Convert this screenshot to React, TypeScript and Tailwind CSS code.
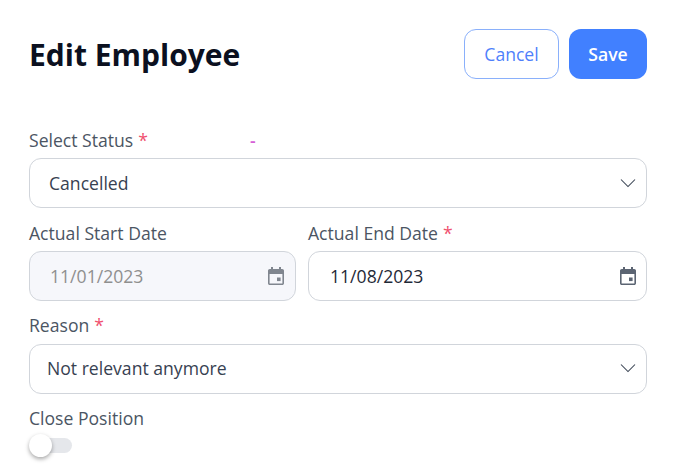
const font = 'font-["Open_Sans",sans-serif]'

function Chevron() {
  return (
    <svg width="16" height="10" viewBox="0 0 16 10" fill="none" stroke="#374151" strokeWidth="1.05">
      <path d="M1 1.5 L8 8.5 L15 1.5" />
    </svg>
  )
}

function CalendarIcon({ color }: { color: string }) {
  return (
    <svg width="16" height="18" viewBox="0 0 16 18" fill={color}>
      <path d="M3 0h2v2h6V0h2v2h1.2C15.2 2 16 2.8 16 3.8v12.4c0 1-.8 1.8-1.8 1.8H1.8C.8 18 0 17.2 0 16.2V3.8C0 2.8.8 2 1.8 2H3V0zM1.6 7v9.4h12.8V7H1.6z" />
      <rect x="9" y="10.5" width="3.6" height="3.6" />
    </svg>
  )
}

function Label({ text, required }: { text: string; required?: boolean }) {
  return (
    <div className="h-[18px] flex items-center text-[17.6px] leading-[18px] text-[#4b5563] whitespace-nowrap">
      {text}
      {required && <span className="ml-[5px] text-[#f0506e]">*</span>}
    </div>
  )
}

function Select({ value, pad }: { value: string; pad: string }) {
  return (
    <div className={`h-[50px] flex items-center justify-between ${pad} pr-[10px] border border-[#d1d5db] rounded-[12px] bg-white text-[17.6px] text-[#374151]`}>
      <span>{value}</span>
      <Chevron />
    </div>
  )
}

export default function App() {
  return (
    <div className={`${font} w-[676px] h-[476px] bg-white pl-[29px] pr-[29px] pt-[29px] overflow-hidden`}>
      <div className="flex items-center justify-between h-[50px]">
        <h1 className="text-[30px] font-bold text-[#0b1020] leading-none pt-[2px]">Edit Employee</h1>
        <div className="flex gap-[10px]">
          <button className="w-[95px] h-[50px] rounded-[12px] border border-[#8ab0fb] bg-white text-[#4f7ffb] text-[17.6px]">Cancel</button>
          <button className="w-[78px] h-[50px] rounded-[12px] bg-[#4180ff] text-white text-[17.6px] font-semibold">Save</button>
        </div>
      </div>

      <div className="mt-[52px] relative">
        <Label text="Select Status" required />
        <span className="absolute left-[221px] top-0 text-[17.6px] leading-[18px] font-semibold text-[#d65fd6]">-</span>
      </div>
      <div className="mt-[9px]">
        <Select value="Cancelled" pad="pl-[19px]" />
      </div>

      <div className="mt-[16px] grid grid-cols-[267px_339px] gap-[12px]">
        <div>
          <Label text="Actual Start Date" />
          <div className="mt-[9px] h-[50px] flex items-center justify-between pl-[20px] pr-[11px] border border-[#d1d5db] rounded-[12px] bg-[#f6f7fb] text-[17.6px] text-[#8f8f8f]">
            <span>11/01/2023</span>
            <CalendarIcon color="#80868f" />
          </div>
        </div>
        <div>
          <Label text="Actual End Date" required />
          <div className="mt-[9px] h-[50px] flex items-center justify-between pl-[21px] pr-[10px] border border-[#d1d5db] rounded-[12px] bg-white text-[17.6px] text-[#1f2937]">
            <span>11/08/2023</span>
            <CalendarIcon color="#5b6472" />
          </div>
        </div>
      </div>

      <div className="mt-[15px]">
        <Label text="Reason" required />
      </div>
      <div className="mt-[10px]">
        <Select value="Not relevant anymore" pad="pl-[17px] pb-[2px]" />
      </div>

      <div className="mt-[15px]">
        <Label text="Close Position" />
      </div>
      <div className="mt-[11px] relative w-[43px] h-[15px] rounded-full bg-[#e5e7eb]">
        <div className="absolute left-0 top-[-4px] w-[23px] h-[23px] rounded-full bg-white shadow-[0_2px_4px_rgba(0,0,0,0.35)]" />
      </div>
    </div>
  )
}
